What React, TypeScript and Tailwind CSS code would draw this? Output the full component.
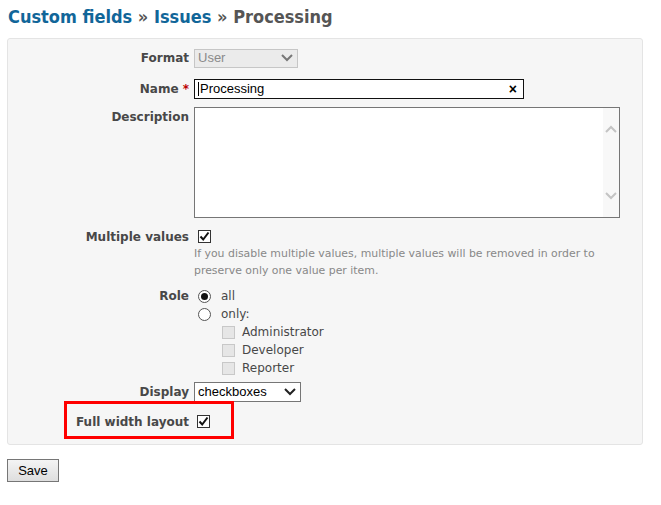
import React from 'react';

const labelCls = 'w-[186px] shrink-0 pr-[5px] text-right font-bold text-[12px] text-[#484848]';

function Check({ checked, disabled }: { checked?: boolean; disabled?: boolean }) {
  return (
    <span
      className={`inline-flex h-[13px] w-[13px] items-center justify-center border ${
        disabled ? 'border-[#c8c8c8] bg-[#e6e6e6]' : 'border-[#333] bg-white'
      }`}
    >
      {checked && (
        <svg width="11" height="11" viewBox="0 0 11 11">
          <path d="M1.5 5.5 L4.2 8.5 L9.5 1.5" fill="none" stroke="#111" strokeWidth="2" />
        </svg>
      )}
    </span>
  );
}

function Radio({ checked }: { checked?: boolean }) {
  return (
    <span className="inline-flex h-[13px] w-[13px] items-center justify-center rounded-full border border-[#555] bg-white">
      {checked && <span className="h-[7px] w-[7px] rounded-full bg-[#111]" />}
    </span>
  );
}

function Chevron({ color = '#222' }: { color?: string }) {
  return (
    <svg width="12" height="8" viewBox="0 0 12 8">
      <path d="M1 1 L6 6 L11 1" fill="none" stroke={color} strokeWidth="2" />
    </svg>
  );
}

export default function App() {
  return (
    <div className="min-h-[505px] bg-white pl-[7px] pr-[18px] pt-[6px] font-['DejaVu_Sans',Verdana,sans-serif]">
      <h2 className="ml-[1px] font-['DejaVu_Sans_Condensed','DejaVu_Sans',sans-serif] text-[18px] font-bold leading-[22px] text-[#555] [font-stretch:condensed]">
        <span className="text-[#116699]">Custom fields</span> » <span className="text-[#116699]">Issues</span> » Processing
      </h2>

      <div className="mt-[10px] h-[407px] rounded-[3px] border border-[#e4e4e4] bg-[#f6f6f6] pt-[9px]">
        {/* Format */}
        <div className="flex h-[20px] items-center">
          <div className={labelCls}>Format</div>
          <div className="flex h-[19px] w-[104px] items-center justify-between border border-[#c6c6c6] bg-[#ebebeb] pl-[3px] pr-[4px] font-['Liberation_Sans',Arial,sans-serif] text-[13px] text-[#8a8a8a]">
            <span>User</span>
            <Chevron color="#777" />
          </div>
        </div>

        {/* Name */}
        <div className="mt-[11px] flex h-[20px] items-center">
          <div className={labelCls}>
            Name <span className="text-[#bb0000]">*</span>
          </div>
          <div className="flex h-[20px] w-[330px] items-center justify-between border border-[#111] bg-white pl-[3px] pr-[6px] font-['Liberation_Sans',Arial,sans-serif] text-[13px] text-black">
            <span className="flex items-center">
              <span className="mr-[1px] h-[14px] w-[1px] bg-black" />
              Processing
            </span>
            <span className="text-[14px] font-bold leading-none">×</span>
          </div>
        </div>

        {/* Description */}
        <div className="mt-[8px] flex">
          <div className={`${labelCls} pt-[3px] leading-[15px]`}>Description</div>
          <div className="flex h-[111px] w-[426px] border border-[#767676] bg-white">
            <div className="flex-1" />
            <div className="flex w-[16px] flex-col items-center justify-between bg-[#f8f8f8] py-[17px]">
              <svg width="12" height="8" viewBox="0 0 12 8">
                <path d="M1 7 L6 2 L11 7" fill="none" stroke="#c4c4c4" strokeWidth="2" />
              </svg>
              <Chevron color="#c4c4c4" />
            </div>
          </div>
        </div>

        {/* Multiple values */}
        <div className="mt-[10px] flex h-[17px] items-center">
          <div className={labelCls}>Multiple values</div>
          <span className="ml-[4px] flex">
            <Check checked />
          </span>
        </div>
        <div className="flex">
          <div className="w-[186px] shrink-0" />
          <p className="w-[425px] text-[10.9px] leading-[17px] text-[#888]">
            If you disable multiple values, multiple values will be removed in order to preserve only one value per item.
          </p>
        </div>

        {/* Role */}
        <div className="mt-[8px] flex">
          <div className={`${labelCls} leading-[18px]`}>Role</div>
          <div className="text-[12px] leading-[18px] text-[#484848]">
            <div className="flex h-[18px] items-center">
              <span className="ml-[4px] mr-[10px] flex">
                <Radio checked />
              </span>
              all
            </div>
            <div className="flex h-[18px] items-center">
              <span className="ml-[4px] mr-[10px] flex">
                <Radio />
              </span>
              only:
            </div>
            {['Administrator', 'Developer', 'Reporter'].map((r) => (
              <div key={r} className="flex h-[18px] items-center">
                <span className="ml-[28px] mr-[7px] flex">
                  <Check disabled />
                </span>
                {r}
              </div>
            ))}
          </div>
        </div>

        {/* Display */}
        <div className="mt-[4px] flex h-[21px] items-center">
          <div className={labelCls}>Display</div>
          <div className="flex h-[20px] w-[107px] items-center justify-between border border-[#767676] bg-white pl-[3px] pr-[4px] font-['Liberation_Sans',Arial,sans-serif] text-[13px] text-black">
            <span>checkboxes</span>
            <Chevron />
          </div>
        </div>

        {/* Full width layout */}
        <div className="relative mt-[10px] flex h-[19px] items-center">
          <div className={labelCls}>Full width layout</div>
          <span className="ml-[3px] flex">
            <Check checked />
          </span>
          <div className="absolute left-[56px] top-[-11px] h-[38px] w-[170px] border-[3px] border-[#ff0000]" />
        </div>
      </div>

      <button className="mt-[14px] h-[23px] w-[52px] border border-[#767676] bg-gradient-to-b from-[#f4f4f4] to-[#dedede] font-['Liberation_Sans',Arial,sans-serif] text-[13px] text-black">
        Save
      </button>
    </div>
  );
}
